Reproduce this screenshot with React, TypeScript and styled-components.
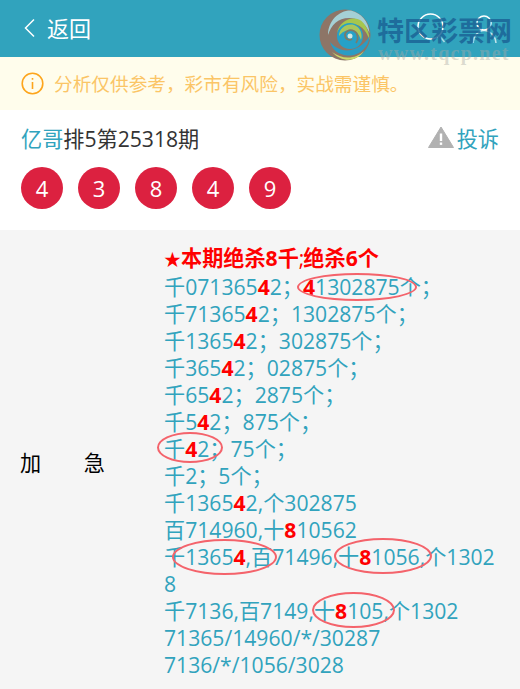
import React from "react";
import styled, { createGlobalStyle } from "styled-components";

const GlobalStyle = createGlobalStyle`
  html, body {
    margin: 0;
    padding: 0;
    height: 100%;
    overflow: hidden;
    background: #fff;
  }
  body {
    font-family: "Open Sans", "Noto Sans CJK SC", sans-serif;
  }
`;

const Page = styled.div`
  width: 520px;
  height: 689px;
  overflow: hidden;
  position: relative;
`;

const Header = styled.header`
  height: 57px;
  background: #31a3bd;
  display: flex;
  align-items: center;
  justify-content: space-between;
  padding: 0 23px 0 24px;
  color: #fff;
`;

const BackLink = styled.div`
  display: flex;
  align-items: center;
  gap: 12px;
  font-size: 22px;
  line-height: 28px;
  padding-bottom: 2px;
`;

const HeaderIcons = styled.div`
  display: flex;
  align-items: center;
  gap: 26px;
`;

const Notice = styled.div`
  height: 53px;
  background: #fffdec;
  display: flex;
  align-items: center;
  gap: 10px;
  padding-left: 21px;
  color: #fbc566;
  font-size: 18.67px;
`;

const NoticeText = styled.span`
  padding-bottom: 2px;
`;

const Summary = styled.section`
  height: 120px;
  box-sizing: border-box;
  padding: 13px 21px 0;
`;

const TitleRow = styled.div`
  display: flex;
  justify-content: space-between;
  align-items: center;
  height: 28px;
  font-size: 21.15px;
  color: #333;
`;

const Accent = styled.span`
  color: #31a3bd;
`;

const Report = styled.div`
  display: flex;
  align-items: center;
  gap: 3px;
  color: #31a3bd;
`;

const Balls = styled.div`
  display: flex;
  gap: 15px;
  margin-top: 16px;
`;

const Ball = styled.div`
  width: 42px;
  height: 42px;
  border-radius: 50%;
  background: #dc2140;
  color: #fff;
  font-size: 22px;
  display: flex;
  align-items: center;
  justify-content: center;
`;

const DetailRow = styled.section`
  background: #f5f5f5;
  display: flex;
  align-items: center;
`;

const RowLabel = styled.div`
  width: 164px;
  flex: none;
  box-sizing: border-box;
  padding: 0 59px 4px 20px;
  display: flex;
  justify-content: space-between;
  font-size: 21.15px;
  color: #000;
`;

const Content = styled.div`
  position: relative;
  width: 336px;
  padding: 14px 0 18px;
  font-size: 21.15px;
  line-height: 27px;
  color: #31a3bd;
  word-break: break-all;
`;

const Line = styled.div``;

const Headline = styled.div`
  color: #f00;
  font-weight: 700;
`;

const Star = styled.span`
  font-size: 17px;
`;

const ThinMark = styled.span`
  font-weight: 400;
  letter-spacing: -1px;
`;

const Hit = styled.b`
  color: #f00;
  font-weight: 700;
`;

const Oval = styled.span<{ $left: number; $top: number; $w: number; $h: number }>`
  position: absolute;
  left: ${(p) => p.$left}px;
  top: ${(p) => p.$top}px;
  width: ${(p) => p.$w}px;
  height: ${(p) => p.$h}px;
  box-sizing: border-box;
  border: 2px solid #f4636b;
  border-radius: 50%;
`;

const Watermark = styled.div`
  position: absolute;
  left: 319px;
  top: 9px;
  width: 195px;
  height: 54px;
  display: flex;
  gap: 7px;
  pointer-events: none;
`;

const WatermarkText = styled.div`
  display: flex;
  flex-direction: column;
`;

const WatermarkName = styled.div`
  font-size: 27px;
  line-height: 32px;
  margin-top: 6px;
  margin-left: -1px;
  font-weight: 700;
  color: rgba(27, 100, 150, 0.85);
  white-space: nowrap;
`;

const WatermarkUrl = styled.div`
  font-family: "Liberation Serif", serif;
  font-size: 20px;
  line-height: 18px;
  margin-top: -3px;
  font-weight: 700;
  letter-spacing: 1.25px;
  color: rgba(170, 170, 165, 0.42);
  white-space: nowrap;
`;

const BackIcon = () => (
  <svg width="11" height="20" viewBox="0 0 11 20" fill="none" stroke="#fff" strokeWidth="1.5">
    <path d="M10 1.5 1.5 10l8.5 8.5" />
  </svg>
);

const SearchIcon = () => (
  <svg width="29" height="31" viewBox="0 0 29 31" fill="none" stroke="#fff" strokeWidth="1.5">
    <circle cx="13.5" cy="13.5" r="12.5" />
    <path d="M22.5 23l5 6" opacity="0.6" />
  </svg>
);

const UserIcon = () => (
  <svg width="25" height="28" viewBox="0 0 25 28" fill="none" stroke="#fff" strokeWidth="1.5">
    <circle cx="12" cy="8" r="7" />
    <path d="M1 28c.5-7 5-12.5 11-12.5S23.5 21 24 28" opacity="0.7" />
  </svg>
);

const InfoIcon = () => (
  <svg width="23" height="23" viewBox="0 0 23 23" fill="none" stroke="#fda51c" strokeWidth="1.6">
    <circle cx="11.5" cy="11.5" r="10.3" />
    <path d="M11.5 10v7M11.5 6v1.8" />
  </svg>
);

const WarnIcon = () => (
  <svg width="26" height="22" viewBox="0 0 26 22">
    <path d="M13 1 25.5 21.5H.5z" fill="#b1b1b1" stroke="#b1b1b1" strokeLinejoin="round" />
    <rect x="11.8" y="7.5" width="2.4" height="7.5" fill="#fff" />
    <rect x="11.8" y="16.5" width="2.4" height="2.4" fill="#fff" />
  </svg>
);

const SwirlLogo = () => (
  <svg width="52" height="52" viewBox="0 0 52 52">
    <circle cx="26" cy="26" r="25.5" fill="#8d7567" />
    <path d="M9 26C9 12 20 1 32 1.5 42 4 49.5 12 50.5 24 46 13 38 9 30 9 19 9 12 16 9 26z" fill="#a5d0d5" />
    <path d="M18 24C20 13 31 7 40 10.5 47 14 50.5 24 50.5 31 47 20 40 14.5 32 15 25 15.5 20 19 18 24z" fill="#a6c64e" />
    <path d="M50.5 27C50 38 40 47.5 28 46.5 20 45.5 13 41 11 33 17 40 25 42.5 32 41 41 39 47 33 50.5 27z" fill="#2a9cc4" />
    <path d="M13 43C22 50 36 51 45 42 38 53 23 54 13 43z" fill="#cbd968" />
    <circle cx="31" cy="27" r="13" fill="#26a1c8" />
    <path d="M20 27C20 19 28 14 35 16 41 18 44 25 42 31 40 24 35 20 29 21 25 22 22 24 20 27z" fill="#a9c65c" />
    <path d="M33 30c-3 2-7 0-7-4 0-4 5-6 9-4 4 2 5 8 2 12" fill="none" stroke="#7d7b68" strokeWidth="1.8" />
    <circle cx="31" cy="27" r="2.5" fill="#d4e8e4" />
  </svg>
);

export default function App() {
  return (
    <Page>
      <GlobalStyle />
      <Header>
        <BackLink>
          <BackIcon />
          返回
        </BackLink>
        <HeaderIcons>
          <SearchIcon />
          <UserIcon />
        </HeaderIcons>
      </Header>
      <Notice>
        <InfoIcon />
        <NoticeText>分析仅供参考，彩市有风险，实战需谨慎。</NoticeText>
      </Notice>
      <Summary>
        <TitleRow>
          <div>
            <Accent>亿哥</Accent>排5第25318期
          </div>
          <Report>
            <WarnIcon />
            投诉
          </Report>
        </TitleRow>
        <Balls>
          {[4, 3, 8, 4, 9].map((n, i) => (
            <Ball key={i}>{n}</Ball>
          ))}
        </Balls>
      </Summary>
      <DetailRow>
        <RowLabel>
          <span>加</span>
          <span>急</span>
        </RowLabel>
        <Content>
          <Headline>
            <Star>★</Star>本期绝杀8千<ThinMark>;</ThinMark>绝杀6个
          </Headline>
          <Line>千071365<Hit>4</Hit>2；<Hit>4</Hit>1302875个；</Line>
          <Line>千71365<Hit>4</Hit>2；1302875个；</Line>
          <Line>千1365<Hit>4</Hit>2；302875个；</Line>
          <Line>千365<Hit>4</Hit>2；02875个；</Line>
          <Line>千65<Hit>4</Hit>2；2875个；</Line>
          <Line>千5<Hit>4</Hit>2；875个；</Line>
          <Line>千<Hit>4</Hit>2；75个；</Line>
          <Line>千2；5个；</Line>
          <Line>千1365<Hit>4</Hit>2,个302875</Line>
          <Line>百714960,十<Hit>8</Hit>10562</Line>
          <Line>千1365<Hit>4</Hit>,百71496,十<Hit>8</Hit>1056,个13028</Line>
          <Line>千7136,百7149,十<Hit>8</Hit>105,个1302</Line>
          <Line>71365/14960/*/30287</Line>
          <Line>7136/*/1056/3028</Line>
          <Oval $left={133} $top={43} $w={120} $h={28} />
          <Oval $left={-7} $top={202} $w={66} $h={31} />
          <Oval $left={8} $top={309} $w={105} $h={36} />
          <Oval $left={170} $top={308} $w={98} $h={36} />
          <Oval $left={148} $top={362} $w={83} $h={36} />
        </Content>
      </DetailRow>
      <Watermark>
        <SwirlLogo />
        <WatermarkText>
          <WatermarkName>特区彩票网</WatermarkName>
          <WatermarkUrl>www.tqcp.net</WatermarkUrl>
        </WatermarkText>
      </Watermark>
    </Page>
  );
}
